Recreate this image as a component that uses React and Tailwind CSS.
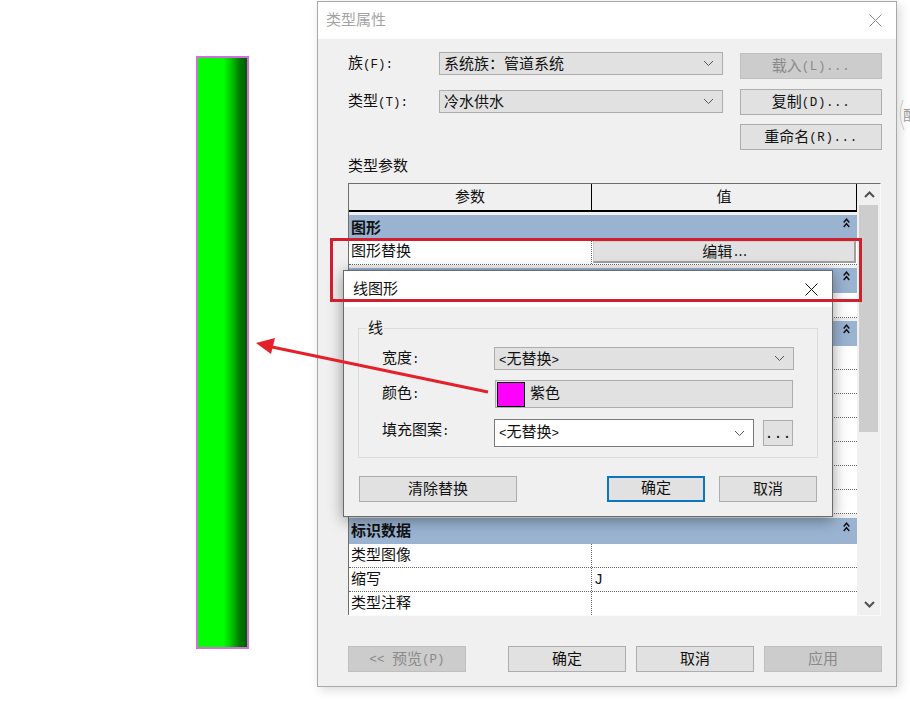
const cjk = "font-['Liberation_Mono','Noto_Sans_CJK_SC',monospace] text-[15px] leading-none";

function L({ children }) {
  return <span className="text-[12.5px]">{children}</span>;
}

function T({ children }) {
  return <span className="text-[12.5px] tracking-[0.6px]">{children}</span>;
}

function Chevron({ className = "text-[#555555]" }) {
  return (
    <svg width="11" height="7" viewBox="0 0 11 7" className={className}>
      <path d="M1 1l4.5 4.5L10 1" fill="none" stroke="currentColor" strokeWidth="1" />
    </svg>
  );
}

function Btn({ children, className = "" }) {
  return (
    <div className={`flex items-center justify-center h-[26px] pt-[2px] border border-[#adadad] bg-[#e1e1e1] text-[#111111] ${className}`}>
      {children}
    </div>
  );
}

function DisabledBtn({ children, className = "" }) {
  return (
    <div className={`flex items-center justify-center h-[26px] pt-[2px] border border-[#bfbfbf] bg-[#cccccc] text-[#8a8a8a] ${className}`}>
      {children}
    </div>
  );
}

function Combo({ children, className = "" }) {
  return (
    <div className={`flex items-center justify-between h-[23px] border border-[#adadad] bg-[#e1e1e1] pl-[4px] pr-[8px] text-[#111111] ${className}`}>
      <span className="pt-[3px]">{children}</span>
      <Chevron />
    </div>
  );
}

function Group({ label, className = "h-[25px]", gap = "" }) {
  return (
    <div className={`flex items-center justify-between bg-[#9ab3d1] pl-[2px] pr-[7px] ${className} ${gap}`}>
      <span className="font-bold text-[#111111] pt-[3px]">{label}</span>
      <svg width="7" height="10" viewBox="0 0 7 10" className="mb-[9px]">
        <path d="M.7 4.5L3.5 1.2 6.3 4.5M.7 9L3.5 5.7 6.3 9" fill="none" stroke="#111111" strokeWidth="1.4" />
      </svg>
    </div>
  );
}

function Row({ label, value, className = "h-[24px]" }) {
  return (
    <div className={`flex bg-white border-b border-dotted border-[#666666] ${className}`}>
      <div className="w-[242px] pl-[2px] pt-[2px] flex items-center text-[#111111]">{label}</div>
      <div className="flex-1 border-l border-dotted border-[#666666] pl-[2px] pt-[2px] flex items-center text-[#111111]">{value}</div>
    </div>
  );
}

function TableArea() {
  return (
    <div className="flex mt-[7px] w-[533px] h-[433px] overflow-hidden border-t border-[#6e6e6e] border-b border-r border-b-[#fafafa] border-r-[#fafafa]">
      <div className="w-[509px] border-l border-[#6e6e6e] overflow-hidden">
        <div className="flex h-[28px] border-b-2 border-black border-r bg-[#f0f0f0] text-[#111111]">
          <div className="w-[242px] pt-[3px] flex items-center justify-center">参数</div>
          <div className="flex-1 border-l border-black pt-[3px] flex items-center justify-center">值</div>
        </div>
        <Group label="图形" gap="mt-[3px]" />
        <div className="flex bg-white border-b border-dotted border-[#666666] h-[25px]">
          <div className="w-[242px] pl-[2px] pt-px flex items-center text-[#111111]">图形替换</div>
          <div className="flex-1 border-l border-dotted border-[#666666] pl-px pr-px pt-px">
            <div className="h-[22px] pt-[3px] bg-[#e1e1e1] border border-[#d0d0d0] border-b-2 border-r-2 border-b-[#a0a0a0] border-r-[#a0a0a0] flex items-center justify-center text-[#111111]">
              编辑<span className="text-[12.5px] tracking-[-3px]">...</span>
            </div>
          </div>
        </div>
        <Group label="" gap="mt-[3px]" />
        <Row label="" value="" className="h-[25px]" />
        <Group label="" gap="mt-[3px]" />
        {[0, 1, 2, 3, 4, 5, 6].map((i) => (
          <Row key={i} label="" value="" />
        ))}
        <Group label="标识数据" className="h-[26px]" gap="mt-[4px]" />
        <Row label="类型图像" value="" />
        <Row label="缩写" value="J" />
        <Row label="类型注释" value="" />
      </div>
      <div className="w-[23px] flex flex-col pl-[2px] pr-[1px]">
        <div className="h-[21px] flex items-center justify-center">
          <svg width="11" height="7" viewBox="0 0 11 7">
            <path d="M1 6l4.5-4.5L10 6" fill="none" stroke="#505050" strokeWidth="2" />
          </svg>
        </div>
        <div className="h-[227px] w-[19px] bg-[#cdcdcd]" />
        <div className="flex-1" />
        <div className="h-[21px] flex items-center justify-center">
          <svg width="11" height="7" viewBox="0 0 11 7">
            <path d="M1 1l4.5 4.5L10 1" fill="none" stroke="#505050" strokeWidth="2" />
          </svg>
        </div>
      </div>
    </div>
  );
}

function MainDialog() {
  return (
    <div className={`ml-[68px] mt-px w-[580px] h-[686px] flex flex-col border border-[#a8a8a8] bg-[#f0f0f0] shadow-[3px_3px_10px_rgba(0,0,0,0.15)] ${cjk}`}>
      <div className="h-[37px] shrink-0 bg-white flex items-center justify-between pl-[8px] pr-[14px]">
        <span className="text-[#a3a3a3] pt-[2px]">类型属性</span>
        <svg width="13" height="13" viewBox="0 0 13 13">
          <path d="M.5.5l12 12M12.5.5l-12 12" stroke="#8a8a8a" strokeWidth="1" />
        </svg>
      </div>
      <div className="flex-1 flex flex-col pl-[30px] pr-[14px]">
        <div className="flex pt-[13px]">
          <div className="w-[375px]">
            <div className="flex items-center h-[23px]">
              <div className="w-[91px] pt-[2px] text-[#111111]">族<L>(F):</L></div>
              <Combo className="w-[284px]">系统族：管道系统</Combo>
            </div>
            <div className="flex items-center h-[23px] mt-[15px]">
              <div className="w-[91px] pt-[2px] text-[#111111]">类型<L>(T):</L></div>
              <Combo className="w-[284px]">冷水供水</Combo>
            </div>
          </div>
          <div className="ml-[17px] mt-px w-[142px]">
            <DisabledBtn>载入<T>(L)...</T></DisabledBtn>
            <Btn className="mt-[10px]">复制<T>(D)...</T></Btn>
            <Btn className="mt-[9px]">重命名<T>(R)...</T></Btn>
          </div>
        </div>
        <div className="mt-[6px] h-[20px] pt-[2px] flex items-center text-[#111111]">类型参数</div>
        <TableArea />
        <div className="flex mt-[30px]">
          <DisabledBtn className="w-[118px]"><L>&lt;&lt;&nbsp;</L>预览<L>(P)</L></DisabledBtn>
          <Btn className="w-[118px] ml-[42px]">确定</Btn>
          <Btn className="w-[118px] ml-[10px]">取消</Btn>
          <DisabledBtn className="w-[118px] ml-[10px]">应用</DisabledBtn>
        </div>
      </div>
    </div>
  );
}

function LineDialog() {
  return (
    <div className={`absolute left-[343px] top-[270px] w-[490px] h-[247px] border border-[#6a6a6a] bg-[#f0f0f0] shadow-[0_3px_14px_rgba(0,0,0,0.4)] ${cjk}`}>
      <div className="h-[36px] bg-white flex items-center justify-between pl-[9px] pr-[14px] text-[#111111]">
        <span className="pt-[3px]">线图形</span>
        <svg width="13" height="13" viewBox="0 0 13 13">
          <path d="M.5.5l12 12M12.5.5l-12 12" stroke="#111111" strokeWidth="1" />
        </svg>
      </div>
      <div className="relative ml-[14px] mt-[21px] w-[460px] h-[130px] border border-[#dcdcdc] pl-[23px] pt-[18px]">
        <span className="absolute left-[8px] top-[-7px] bg-[#f0f0f0] px-px text-[#111111]">线</span>
        <div className="flex items-center h-[23px]">
          <div className="w-[112px] pt-[2px] text-[#111111]">宽度<L>:</L></div>
          <Combo className="w-[300px]"><L>&lt;</L>无替换<L>&gt;</L></Combo>
        </div>
        <div className="flex items-center h-[28px] mt-[10px]">
          <div className="w-[113px] text-[#111111]">颜色<L>:</L></div>
          <div className="w-[298px] h-[28px] border border-[#adadad] bg-[#e1e1e1] flex items-center pl-[1px] text-[#111111]">
            <div className="w-[28px] h-[25px] bg-[#ff00ff] border border-black" />
            <span className="ml-[5px] pt-px">紫色</span>
          </div>
        </div>
        <div className="flex items-center h-[28px] mt-[11px]">
          <div className="w-[112px] pb-[4px] text-[#111111]">填充图案<L>:</L></div>
          <div className="w-[260px] h-[28px] border border-[#7a7a7a] bg-white flex items-center justify-between pl-[4px] pr-[8px] text-[#111111]">
            <span className="pt-px"><L>&lt;</L>无替换<L>&gt;</L></span>
            <Chevron />
          </div>
          <Btn className="w-[30px] ml-[9px]">...</Btn>
        </div>
      </div>
      <div className="flex ml-[15px] mt-[18px]">
        <Btn className="w-[158px]">清除替换</Btn>
        <div className="flex items-center justify-center w-[98px] h-[26px] pt-px ml-[90px] border-2 border-[#0f74bd] bg-[#e1e1e1] text-[#111111]">确定</div>
        <Btn className="w-[98px] ml-[14px]">取消</Btn>
      </div>
    </div>
  );
}

export default function App() {
  return (
    <div className="relative w-[910px] h-[702px] bg-white overflow-hidden flex items-start">
      <div className="ml-[196px] mt-[56px] w-[53px] h-[593px] shrink-0 bg-[#d070d8] p-[2px]">
        <div className="w-full h-full bg-[linear-gradient(to_right,#00ff00_0%,#00ff00_52%,#00c800_68%,#007a00_85%,#005a00_100%)]" />
      </div>
      <MainDialog />
      <LineDialog />
      <div className="absolute left-[330px] top-[238px] w-[532px] h-[64px] border-[3px] border-[#d01f2e]" />
      <svg className="absolute left-0 top-0" width="910" height="702" viewBox="0 0 910 702">
        <path d="M488 392L272 347" stroke="#e5202b" strokeWidth="3" fill="none" />
        <path d="M256 343L275 338L271 354Z" fill="#e5202b" />
        <path d="M903 100Q897 115 904 130" stroke="#c8c8c8" fill="none" />
      </svg>
      <span className="absolute left-[903px] top-[107px] text-[14px] leading-none text-[#9a9a9a] font-['Noto_Sans_CJK_SC',sans-serif]">配</span>
    </div>
  );
}
